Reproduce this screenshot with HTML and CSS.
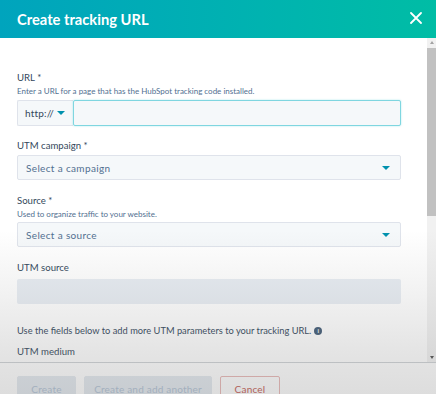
FILE: index.html
```html
<!DOCTYPE html>
<html>
<head>
<meta charset="utf-8">
<link rel="stylesheet" href="styles.css">
</head>
<body>
<div class="modal">
  <header class="head">
    <h1 class="title">Create tracking URL</h1>
    <svg class="close" width="12" height="12" viewBox="0 0 12 12"><path d="M1 1L11 11M11 1L1 11" stroke="#fff" stroke-width="1.8" stroke-linecap="round"/></svg>
  </header>
  <div class="main">
    <div class="content">
      <div class="field f-url">
        <div class="label">URL *</div>
        <div class="help">Enter a URL for a page that has the HubSpot tracking code installed.</div>
        <div class="group">
          <div class="proto">http:// <span class="caret"></span></div>
          <div class="urlinput"></div>
        </div>
      </div>
      <div class="field f-camp">
        <div class="label">UTM campaign *</div>
        <div class="select"><span>Select a campaign</span><span class="caret"></span></div>
      </div>
      <div class="field f-src">
        <div class="label">Source *</div>
        <div class="help">Used to organize traffic to your website.</div>
        <div class="select"><span>Select a source</span><span class="caret"></span></div>
      </div>
      <div class="field f-utm">
        <div class="label">UTM source</div>
        <div class="disabled"></div>
      </div>
      <p class="note">Use the fields below to add more UTM parameters to your tracking URL. <span class="info">i</span></p>
      <div class="label medium">UTM medium</div>
    </div>
    <div class="scrollbar">
      <span class="arrow up"></span>
      <div class="thumb"></div>
      <span class="arrow down"></span>
    </div>
  </div>
  <footer class="foot">
    <button class="btn btn-dis create">Create</button>
    <button class="btn btn-dis another">Create and add another</button>
    <button class="btn cancel">Cancel</button>
  </footer>
  <div class="fade"></div>
</div>
</body>
</html>
```
FILE: styles.css
```css
html, body { margin: 0; padding: 0; }
body { width: 436px; height: 394px; overflow: hidden; background: #fff; font-family: Lato, "Noto Sans", sans-serif; color: #33475b; }
.modal { position: relative; width: 436px; height: 394px; display: flex; flex-direction: column; }
.head { height: 38px; flex: none; display: flex; align-items: center; justify-content: space-between; padding: 0 14px 0 17px; background: linear-gradient(90deg, #00a4bd 0%, #00b3b0 60%, #00bda5 100%); }
.title { margin: 0; font-size: 14.7px; font-weight: 700; color: #fff; letter-spacing: 0; }
.close { display: block; margin-top: -3px; }
.main { flex: 1; display: flex; min-height: 0; }
.content { flex: 1; padding: 34px 26px 0 17px; overflow: hidden; }
.label { font-size: 9.6px; line-height: 12px; color: #33475b; }
.help { font-size: 8px; line-height: 10px; color: #516f90; margin-top: 2px; }
.field { display: flex; flex-direction: column; }
.group { display: flex; height: 26px; margin-top: 4px; }
.proto { width: 56px; box-sizing: border-box; border: 1px solid #dfe3eb; border-right: none; background: #f5f8fa; border-radius: 2px 0 0 2px; display: flex; align-items: center; padding-left: 7px; font-size: 10px; gap: 3px; letter-spacing: 0.2px; }
.urlinput { flex: 1; box-sizing: border-box; border: 1.5px solid #7fd6e0; background: #f5f8fa; border-radius: 2px; box-shadow: 0 0 2px rgba(0,189,200,0.35); }
.caret { width: 0; height: 0; border-left: 4px solid transparent; border-right: 4px solid transparent; border-top: 4px solid #0091ae; }
.select { height: 25px; box-sizing: border-box; margin-top: 3px; border: 1px solid #dfe3eb; background: #f5f8fa; border-radius: 2px; display: flex; align-items: center; justify-content: space-between; padding: 0 10px 0 8px; font-size: 10px; letter-spacing: 0.35px; color: #516f90; }
.f-camp { margin-top: 14px; }
.f-src { margin-top: 15px; }
.f-src .select { margin-top: 3px; }
.f-utm { margin-top: 15px; }
.disabled { height: 25px; margin-top: 5px; background: #e8edf3; border-radius: 2px; }
.note { margin: 21px 0 0; font-size: 9.3px; line-height: 12px; color: #33475b; display: flex; align-items: center; gap: 3px; }
.info { display: inline-flex; align-items: center; justify-content: center; width: 8px; height: 8px; border-radius: 50%; background: #425b76; color: #fff; font-size: 6px; font-weight: 700; line-height: 1; }
.medium { margin-top: 9px; }
.scrollbar { width: 9px; flex: none; background: #f1f1f1; display: flex; flex-direction: column; align-items: center; }
.arrow { width: 0; height: 0; border-left: 2.5px solid transparent; border-right: 2.5px solid transparent; margin: 3px 0; }
.arrow.up { border-bottom: 3px solid #a3a3a3; }
.arrow.down { border-top: 3px solid #505050; margin-top: auto; }
.thumb { width: 9px; height: 168px; background: #c1c1c1; margin-top: 1px; }
.foot { height: 32px; flex: none; border-top: 1px solid #cfd3d6; display: flex; align-items: flex-start; gap: 8px; padding: 13px 0 0 17px; box-sizing: border-box; }
.btn { font-family: inherit; font-size: 10px; height: 26px; border-radius: 2px; padding: 0; display: flex; align-items: center; justify-content: center; letter-spacing: 0.2px; }
.btn-dis { background: #e3e9ef; border: 1px solid #e3e9ef; color: #b0c1d4; }
.create { width: 59px; }
.another { width: 128px; }
.cancel { width: 60px; background: #fff; border: 1px solid #e8b7b5; color: #c2574f; }
.fade { position: absolute; left: 0; right: 0; top: 230px; bottom: 0; pointer-events: none; background: linear-gradient(180deg, rgba(120,120,120,0) 0%, rgba(120,120,120,0.1) 40%, rgba(120,120,120,0.2) 75%, rgba(120,120,120,0.25) 100%); }
```
